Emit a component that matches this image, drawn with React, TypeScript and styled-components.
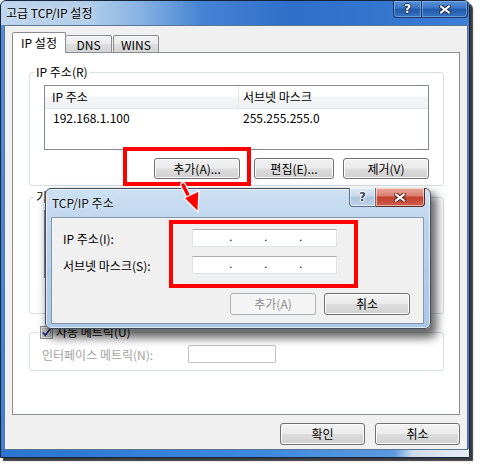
import React from 'react';
import styled, { createGlobalStyle } from 'styled-components';

const Global = createGlobalStyle`
  html, body { margin: 0; padding: 0; background: #ffffff; }
  body {
    font-family: "Noto Sans CJK KR", "Noto Sans", sans-serif;
    font-size: 12px;
    color: #000;
  }
  * { box-sizing: border-box; }
`;

const Page = styled.div`
  position: relative;
  width: 480px;
  height: 468px;
  background: #ffffff;
  overflow: hidden;
`;

const Window = styled.div`
  width: 470px;
  height: 458px;
  border: 1px solid #14243a;
  border-radius: 6px 6px 0 0;
  padding: 0 1px 7px 3px;
  display: flex;
  flex-direction: column;
  overflow: hidden;
  background:
    linear-gradient(90deg, #2b74cf 0%, #3d89df 55%, #5a9be0 84%, #cfdcea 88%, #e6ecf3 100%) left bottom / 100% 8px no-repeat,
    linear-gradient(180deg, #4f90db 0%, #3e80d4 100%);
  box-shadow: 3px 3px 1px rgba(25, 25, 30, 0.85);
`;

const TitleBar = styled.div`
  height: 24px;
  flex: none;
  margin: 0 -1px 0 -3px;
  padding: 0 1px 0 4px;
  display: flex;
  justify-content: space-between;
  align-items: flex-start;
  background: linear-gradient(90deg, #bfd5ed 0px, #b0cce9 90px, #86b2e3 140px, #4684d4 200px, #2f6fca 290px, #3577cf 400px, #3e80d6 470px);
`;

const WinTitle = styled.span`
  line-height: 24px;
  font-size: 12px;
  color: #000;
  padding-left: 1px;
  text-shadow: 0 0 5px rgba(255, 255, 255, 0.9);
`;

const CaptionGroup = styled.div<{ $mt?: number; $mr?: number }>`
  display: flex;
  margin-top: ${(p) => p.$mt ?? 0}px;
  margin-right: ${(p) => p.$mr ?? 0}px;
`;

const CapBtn = styled.div<{ $w: number; $h: number; $variant: 'blue' | 'light' | 'red'; $pos: 'first' | 'last' }>`
  width: ${(p) => p.$w}px;
  height: ${(p) => p.$h}px;
  display: flex;
  align-items: center;
  justify-content: center;
  border: 1px solid ${(p) => (p.$variant === 'blue' ? '#1d3a66' : p.$variant === 'red' ? '#5a2a26' : '#5f6f83')};
  border-top: none;
  ${(p) => (p.$pos === 'first' ? 'border-bottom-left-radius: 4px;' : 'border-bottom-right-radius: 4px; border-left: none;')}
  box-shadow: inset 0 0 0 1px ${(p) => (p.$variant === 'blue' ? 'rgba(150,190,240,0.55)' : 'rgba(255,255,255,0.55)')};
  background: ${(p) =>
    p.$variant === 'blue'
      ? 'linear-gradient(180deg, #5a92d8 0%, #3a75c6 45%, #2459a9 50%, #3572c4 100%)'
      : p.$variant === 'red'
      ? 'linear-gradient(180deg, #e9a89c 0%, #d97c6d 45%, #c2412f 50%, #cf5d4b 100%)'
      : 'linear-gradient(180deg, #dce8f5 0%, #c6d8ec 45%, #aec5df 50%, #bcd1e8 100%)'};
`;

const HelpGlyph = styled.span<{ $dark?: boolean }>`
  font-family: "DejaVu Sans", sans-serif;
  font-weight: bold;
  font-size: 12px;
  line-height: 12px;
  color: ${(p) => (p.$dark ? '#3b4a5e' : '#ffffff')};
  text-shadow: ${(p) =>
    p.$dark
      ? '0 0 1px #fff, 1px 0 0 #fff, -1px 0 0 #fff, 0 1px 0 #fff, 0 -1px 0 #fff'
      : '1px 0 0 #1a2b45, -1px 0 0 #1a2b45, 0 1px 0 #1a2b45, 0 -1px 0 #1a2b45'};
`;

const Body = styled.div`
  flex: 1;
  background: #f0f0f0;
  border: 1px solid #5d7594;
  padding: 6px 7px 4px 7px;
  display: flex;
  flex-direction: column;
`;

const TabStrip = styled.div`
  display: flex;
  align-items: flex-end;
  height: 21px;
  margin-bottom: -1px;
  position: relative;
  z-index: 1;
`;

const Tab = styled.div<{ $w: number; $active?: boolean; $ml?: number; $noLeft?: boolean }>`
  width: ${(p) => p.$w}px;
  height: ${(p) => (p.$active ? 21 : 18)}px;
  margin-left: ${(p) => p.$ml ?? 0}px;
  display: flex;
  align-items: center;
  justify-content: center;
  border: 1px solid #898c95;
  ${(p) => (p.$active ? 'border-bottom: none;' : '')}
  ${(p) => (p.$noLeft ? 'border-left: none;' : '')}
  border-radius: 2px 2px 0 0;
  background: ${(p) =>
    p.$active ? '#ffffff' : 'linear-gradient(180deg, #f4f4f4 0%, #ebebeb 48%, #dddddd 52%, #d5d5d5 100%)'};
  padding-bottom: ${(p) => (p.$active ? 1 : 0)}px;
  font-size: 12px;
`;

const Panel = styled.div`
  height: 363px;
  flex: none;
  border: 1px solid #898c95;
  background: #ffffff;
  padding: 11px 15px 0 16px;
  display: flex;
  flex-direction: column;
`;

const Group = styled.fieldset<{ $mt: number; $pb?: number; $pl?: number }>`
  margin: ${(p) => p.$mt}px 0 0 0;
  padding: 5px 14px ${(p) => p.$pb ?? 6}px ${(p) => p.$pl ?? 14}px;
  border: 1px solid #d5dfe5;
  border-radius: 3px;
  min-width: 0;
`;

const Legend = styled.legend<{ $ml: number }>`
  padding: 0 2px;
  margin-left: ${(p) => p.$ml}px;
  height: 16px;
  line-height: 16px;
  font-size: 12px;
  display: flex;
  align-items: center;
  gap: 3px;
`;

const ListView = styled.div<{ $h: number }>`
  height: ${(p) => p.$h}px;
  border: 1px solid #828790;
  background: #ffffff;
`;

const ListHeader = styled.div`
  display: grid;
  grid-template-columns: 194px 1fr;
  height: 23px;
  background: linear-gradient(180deg, #ffffff 0%, #ffffff 45%, #f4f5f7 50%, #f1f2f4 100%);
  border-bottom: 1px solid #e3e5e8;
`;

const HeaderCell = styled.div<{ $pl: number; $divider?: boolean }>`
  padding-left: ${(p) => p.$pl}px;
  line-height: 22px;
  ${(p) => (p.$divider ? 'border-right: 1px solid #e3e5e8;' : '')}
`;

const ListRow = styled.div`
  display: grid;
  grid-template-columns: 194px 1fr;
  height: 18px;
  line-height: 18px;
`;

const Cell = styled.div<{ $pl: number }>`
  padding-left: ${(p) => p.$pl}px;
`;

const ButtonRow = styled.div<{ $mt: number; $gap?: number }>`
  display: flex;
  justify-content: flex-end;
  margin-top: ${(p) => p.$mt}px;
  gap: ${(p) => p.$gap ?? 0}px;
`;

const Button = styled.div<{ $w: number; $h: number; $ml?: number; $disabled?: boolean }>`
  width: ${(p) => p.$w}px;
  height: ${(p) => p.$h}px;
  margin-left: ${(p) => p.$ml ?? 0}px;
  display: flex;
  align-items: center;
  justify-content: center;
  border: 1px solid ${(p) => (p.$disabled ? '#adb2b5' : '#707070')};
  border-radius: 3px;
  background: ${(p) =>
    p.$disabled ? '#f4f4f4' : 'linear-gradient(180deg, #f2f2f2 0%, #ebebeb 48%, #dddddd 52%, #cfcfcf 100%)'};
  box-shadow: ${(p) => (p.$disabled ? 'none' : 'inset 0 0 0 1px #fbfbfb')};
  color: ${(p) => (p.$disabled ? '#8d8d8d' : '#000')};
  font-size: 12px;
  padding-bottom: 1px;
`;

const MetricRow = styled.div`
  display: flex;
  align-items: center;
  height: 18px;
`;

const DisabledLabel = styled.span`
  width: 146px;
  color: #a3a3a3;
`;

const SmallInput = styled.div`
  width: 88px;
  height: 18px;
  border: 1px solid #c4c4c4;
  border-radius: 2px;
  background: #ffffff;
`;

const BottomRow = styled.div`
  display: flex;
  justify-content: flex-end;
  gap: 10px;
  margin-top: 8px;
`;

/* ---- overlaid dialog ---- */
const Dialog = styled.div`
  position: absolute;
  left: 45px;
  top: 188px;
  width: 386px;
  height: 141px;
  z-index: 5;
  border: 1px solid #424d5b;
  border-radius: 6px;
  padding: 0 6px 4px 5px;
  display: flex;
  flex-direction: column;
  background: linear-gradient(180deg, #cde0f3 0%, #bdd5ee 25%, #b2cdea 60%, #aac7e6 100%);
  box-shadow: 4px 7px 10px 2px rgba(0, 0, 0, 0.6), inset 0 0 0 1px rgba(255, 255, 255, 0.6);
`;

const DlgTitleBar = styled.div`
  height: 28px;
  flex: none;
  display: flex;
  justify-content: space-between;
`;

const DlgTitle = styled.span`
  align-self: center;
  padding-left: 1px;
  padding-bottom: 1px;
  font-size: 12px;
  color: #111;
  text-shadow: 0 0 5px rgba(255, 255, 255, 0.9);
`;

const DlgBody = styled.div`
  flex: 1;
  border: 1px solid #8797aa;
  background: #f0f0f0;
  padding: 11px 13px 8px 11px;
  display: flex;
  flex-direction: column;
`;

const FieldGrid = styled.div`
  display: grid;
  grid-template-columns: 129px 145px;
  grid-auto-rows: 18px;
  row-gap: 9px;
  align-items: center;
`;

const FieldLabel = styled.span`
  font-size: 12px;
`;

const IpField = styled.div`
  height: 18px;
  display: flex;
  align-items: stretch;
  padding: 0 2px 0 4px;
  border: 1px solid #dfe3e8;
  border-top-color: #abadb3;
  background: #ffffff;
  line-height: 16px;
`;

const Octet = styled.span`
  flex: 1;
`;

const Dot = styled.span`
  width: 3px;
  text-align: center;
  font-family: "DejaVu Sans", sans-serif;
  font-size: 11px;
`;

const HiddenButtons = styled.div`
  height: 21px;
  margin-top: 8px;
`;

const RedBox = styled.div`
  position: absolute;
  z-index: 10;
  border: 4px solid #ff0000;
  pointer-events: none;
`;

const ArrowSvg = styled.svg`
  position: absolute;
  left: 0;
  top: 0;
  z-index: 11;
  pointer-events: none;
`;

const HelpIcon: React.FC<{ dark?: boolean }> = ({ dark }) => <HelpGlyph $dark={dark}>?</HelpGlyph>;

const CloseIcon: React.FC<{ w: number; h: number; outline: string }> = ({ w, h, outline }) => (
  <svg width={w} height={h} viewBox={`0 0 ${w} ${h}`}>
    <path d={`M2 1.5 L${w - 2} ${h - 1.5} M${w - 2} 1.5 L2 ${h - 1.5}`} stroke={outline} strokeWidth="4" strokeLinecap="square" fill="none" />
    <path d={`M2 1.5 L${w - 2} ${h - 1.5} M${w - 2} 1.5 L2 ${h - 1.5}`} stroke="#ffffff" strokeWidth="2" strokeLinecap="square" fill="none" />
  </svg>
);

const CheckIcon = () => (
  <svg width="13" height="13" viewBox="0 0 13 13">
    <rect x="0.5" y="0.5" width="12" height="12" fill="#e4e4e4" stroke="#8e8f8f" />
    <rect x="2.5" y="2.5" width="8" height="8" fill="#cfcfcf" stroke="#b9b9b9" />
    <path d="M3 6.5 L5.3 9.2 L10.5 2.5" stroke="#26357a" strokeWidth="1.8" fill="none" />
  </svg>
);

const IpInput = () => (
  <IpField>
    <Octet />
    <Dot>.</Dot>
    <Octet />
    <Dot>.</Dot>
    <Octet />
    <Dot>.</Dot>
    <Octet />
  </IpField>
);

export default function App() {
  return (
    <>
      <Global />
      <Page>
        <Window>
          <TitleBar>
            <WinTitle>고급 TCP/IP 설정</WinTitle>
            <CaptionGroup>
              <CapBtn $w={29} $h={17} $variant="blue" $pos="first">
                <HelpIcon />
              </CapBtn>
              <CapBtn $w={46} $h={17} $variant="blue" $pos="last">
                <CloseIcon w={12} h={9} outline="#1a2b45" />
              </CapBtn>
            </CaptionGroup>
          </TitleBar>
          <Body>
            <TabStrip>
              <Tab $w={54} $active>IP 설정</Tab>
              <Tab $w={46} $noLeft>DNS</Tab>
              <Tab $w={46} $ml={1}>WINS</Tab>
            </TabStrip>
            <Panel>
              <Group $mt={0}>
                <Legend $ml={-10}>IP 주소(R)</Legend>
                <ListView $h={65}>
                  <ListHeader>
                    <HeaderCell $pl={7} $divider>IP 주소</HeaderCell>
                    <HeaderCell $pl={4}>서브넷 마스크</HeaderCell>
                  </ListHeader>
                  <ListRow>
                    <Cell $pl={8}>192.168.1.100</Cell>
                    <Cell $pl={4}>255.255.255.0</Cell>
                  </ListRow>
                </ListView>
                <ButtonRow $mt={8}>
                  <Button $w={86} $h={21}>추가(A)...</Button>
                  <Button $w={80} $h={21} $ml={14}>편집(E)...</Button>
                  <Button $w={86} $h={21} $ml={9}>제거(V)</Button>
                </ButtonRow>
              </Group>
              <Group $mt={3}>
                <Legend $ml={-10}>기</Legend>
                <ListView $h={68} />
                <HiddenButtons />
              </Group>
              <Group $mt={10} $pb={7} $pl={12}>
                <Legend $ml={-4}>
                  <CheckIcon />
                  <span>자동 메트릭(U)</span>
                </Legend>
                <MetricRow>
                  <DisabledLabel>인터페이스 메트릭(N):</DisabledLabel>
                  <SmallInput />
                </MetricRow>
              </Group>
            </Panel>
            <BottomRow>
              <Button $w={85} $h={22}>확인</Button>
              <Button $w={85} $h={22}>취소</Button>
            </BottomRow>
          </Body>
        </Window>

        <Dialog>
          <DlgTitleBar>
            <DlgTitle>TCP/IP 주소</DlgTitle>
            <CaptionGroup $mt={-1} $mr={-1}>
              <CapBtn $w={27} $h={19} $variant="light" $pos="first">
                <HelpIcon dark />
              </CapBtn>
              <CapBtn $w={49} $h={19} $variant="red" $pos="last">
                <CloseIcon w={12} h={9} outline="#5b1e18" />
              </CapBtn>
            </CaptionGroup>
          </DlgTitleBar>
          <DlgBody>
            <FieldGrid>
              <FieldLabel>IP 주소(I):</FieldLabel>
              <IpInput />
              <FieldLabel>서브넷 마스크(S):</FieldLabel>
              <IpInput />
            </FieldGrid>
            <ButtonRow $mt={19} $gap={8}>
              <Button $w={86} $h={22} $disabled>추가(A)</Button>
              <Button $w={86} $h={22}>취소</Button>
            </ButtonRow>
          </DlgBody>
        </Dialog>

        <RedBox style={{ left: 123, top: 147, width: 128, height: 39 }} />
        <RedBox style={{ left: 169, top: 220, width: 189, height: 68 }} />
        <ArrowSvg width="480" height="468" viewBox="0 0 480 468">
          <path d="M183 185 L191 201" stroke="#ffffff" strokeWidth="6" strokeLinecap="round" />
          <path d="M183 185 L191 201" stroke="#ff0000" strokeWidth="3.5" strokeLinecap="round" />
          <polygon points="184,198 199,191 198,212" fill="#ff0000" stroke="#ffffff" strokeWidth="1.2" strokeLinejoin="miter" />
        </ArrowSvg>
      </Page>
    </>
  );
}
